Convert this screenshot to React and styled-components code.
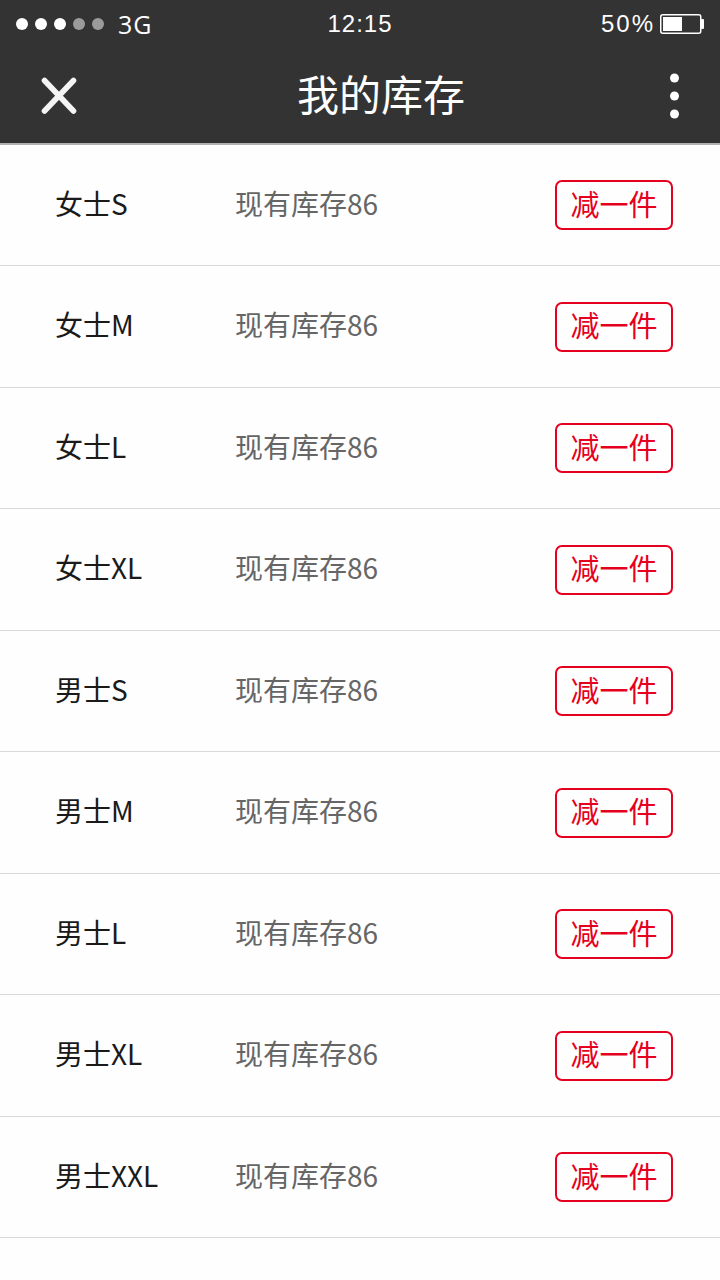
import React from "react";
import styled, { createGlobalStyle } from "styled-components";

const GlobalStyle = createGlobalStyle`
  * {
    box-sizing: border-box;
  }
  body {
    margin: 0;
    background: #fefefe;
    font-family: "Noto Sans CJK SC", sans-serif;
  }
`;

const Header = styled.header`
  background: #333333;
  color: #ffffff;
  border-bottom: 2px solid #b4b1b1;
`;

const StatusBar = styled.div`
  display: grid;
  grid-template-columns: 1fr auto 1fr;
  align-items: center;
  height: 48px;
  padding: 0 16px;
  font-family: "Liberation Sans", Arial, sans-serif;
  font-size: 24px;
  line-height: 28px;
  letter-spacing: 1px;
`;

const Signal = styled.div`
  display: flex;
  align-items: center;
  gap: 14px;
`;

const Dots = styled.div`
  display: flex;
  gap: 7px;
`;

const Dot = styled.span`
  width: 12px;
  height: 12px;
  border-radius: 50%;
  background: ${({ $on }) => ($on ? "#ffffff" : "#9b9b9b")};
`;

const Network = styled.span`
  font-family: "Open Sans", sans-serif;
  font-size: 25px;
`;

const Battery = styled.div`
  display: flex;
  justify-content: flex-end;
  align-items: center;
  gap: 5px;
  letter-spacing: 2px;

  svg {
    display: block;
  }
`;

const TitleBar = styled.div`
  display: grid;
  grid-template-columns: 60px 1fr 16px;
  align-items: center;
  height: 95px;
  padding: 0 38px 0 36px;
`;

const Title = styled.h1`
  margin: 0;
  padding-bottom: 6px;
  font-size: 42px;
  line-height: 60px;
  font-weight: 400;
  text-align: center;
`;

const IconButton = styled.button`
  display: flex;
  align-items: center;
  justify-content: center;
  width: 46px;
  height: 48px;
  margin: 0;
  padding: 0;
  border: 0;
  background: none;
  color: inherit;
  cursor: pointer;
  justify-self: center;

  &:first-child {
    justify-self: start;
  }
`;

const List = styled.ul`
  margin: 0;
  padding: 0;
  list-style: none;
`;

const Row = styled.li`
  display: grid;
  grid-template-columns: 180px 1fr auto;
  align-items: center;
  height: 121px;
  padding: 0 47px 0 55px;
  border-bottom: 1px solid #d9d9d9;
  font-size: 28px;
  line-height: 40px;

  &:nth-child(even) {
    height: 122px;
  }
`;

const Label = styled.span`
  padding-bottom: 5px;
  color: ${({ $muted }) => ($muted ? "#666666" : "#1a1a1a")};
`;

const ReduceButton = styled.button`
  width: 118px;
  height: 50px;
  padding: 0 0 5px;
  border: 2px solid #e60020;
  border-radius: 7px;
  background: none;
  color: #e60020;
  font-family: inherit;
  font-size: 29px;
  line-height: 40px;
  cursor: pointer;
`;

const items = ["女士S", "女士M", "女士L", "女士XL", "男士S", "男士M", "男士L", "男士XL", "男士XXL"];

export default function App() {
  return (
    <>
      <GlobalStyle />
      <Header>
        <StatusBar>
          <Signal>
            <Dots>
              {[1, 2, 3, 4, 5].map((n) => (
                <Dot key={n} $on={n <= 3} />
              ))}
            </Dots>
            <Network>3G</Network>
          </Signal>
          <span>12:15</span>
          <Battery>
            <span>50%</span>
            <svg width="44" height="20" viewBox="0 0 44 20" aria-hidden="true">
              <rect x="0.75" y="0.75" width="40" height="18.5" rx="2" fill="none" stroke="#fff" strokeWidth="1.5" />
              <rect x="3" y="3" width="19" height="14" fill="#fff" />
              <rect x="41" y="5" width="3" height="10" rx="1" fill="#fff" />
            </svg>
          </Battery>
        </StatusBar>
        <TitleBar>
          <IconButton type="button" aria-label="关闭">
            <svg width="36" height="38" viewBox="0 0 36 38" aria-hidden="true">
              <path d="M3.5 3.5L32.5 34M32.5 3.5L3.5 34" stroke="#f4f4f4" strokeWidth="5.6" strokeLinecap="round" />
            </svg>
          </IconButton>
          <Title>我的库存</Title>
          <IconButton type="button" aria-label="更多">
            <svg width="10" height="46" viewBox="0 0 10 46" aria-hidden="true">
              <circle cx="5.5" cy="5" r="4.5" fill="#fff" />
              <circle cx="5.5" cy="23" r="4.5" fill="#fff" />
              <circle cx="5.5" cy="41" r="4.5" fill="#fff" />
            </svg>
          </IconButton>
        </TitleBar>
      </Header>
      <List>
        {items.map((name) => (
          <Row key={name}>
            <Label>{name}</Label>
            <Label $muted>现有库存86</Label>
            <ReduceButton type="button">减一件</ReduceButton>
          </Row>
        ))}
      </List>
    </>
  );
}
